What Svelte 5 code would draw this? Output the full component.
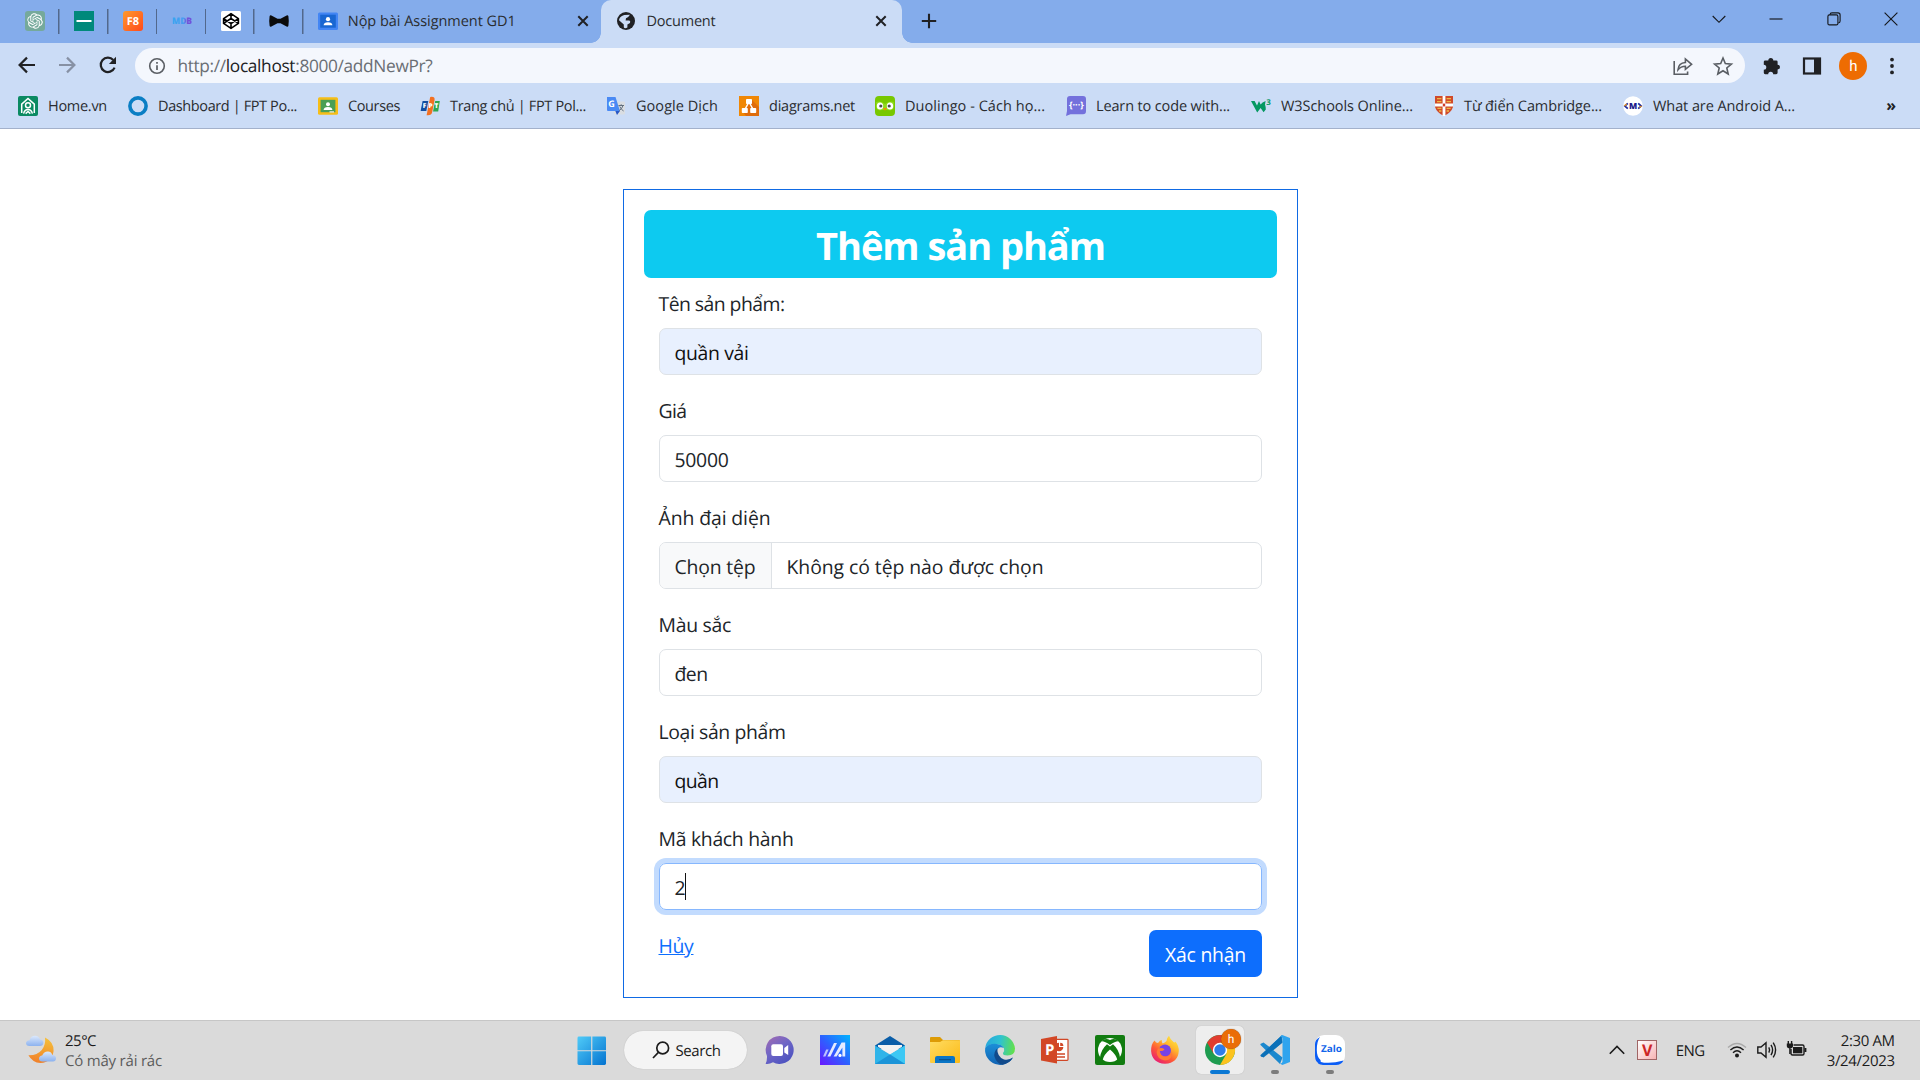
<script>
  // Tightens or loosens letter-spacing so that a label fills a given width.
  function fit(node, width) {
    const apply = () => {
      node.style.letterSpacing = '0px';
      const n = [...node.textContent].length;
      const natural = node.getBoundingClientRect().width;
      if (n > 0) node.style.letterSpacing = `${((width - natural) / n).toFixed(3)}px`;
    };
    apply();
    document.fonts?.ready.then(apply);
  }

  const pinned = ['gpt', 'sheet', 'f8', 'mdb', 'codepen', 'bow'];

  const bookmarks = [
    { icon: 'home', text: 'Home.vn', w: 59, cell: 110 },
    { icon: 'ring', text: 'Dashboard | FPT Po...', w: 139, cell: 190 },
    { icon: 'courses', text: 'Courses', w: 52, cell: 102 },
    { icon: 'fpt', text: 'Trang chủ | FPT Pol...', w: 136, cell: 186 },
    { icon: 'translate', text: 'Google Dịch', w: 82, cell: 133 },
    { icon: 'diagrams', text: 'diagrams.net', w: 86, cell: 136 },
    { icon: 'duo', text: 'Duolingo - Cách họ...', w: 140, cell: 191 },
    { icon: 'learn', text: 'Learn to code with...', w: 134, cell: 185 },
    { icon: 'w3', text: 'W3Schools Online...', w: 132, cell: 183 },
    { icon: 'cambridge', text: 'Từ điển Cambridge...', w: 138, cell: 189 },
    { icon: 'm', text: 'What are Android A...', w: 142, cell: 190 }
  ];

  const fields = [
    { label: 'Tên sản phẩm:', lw: 126, value: 'quần vải', vw: 74, kind: 'filled' },
    { label: 'Giá', lw: 28, value: '50000', vw: 54, kind: '' },
    { label: 'Ảnh đại diện', lw: 112, value: 'Không có tệp nào được chọn', vw: 257, kind: 'file' },
    { label: 'Màu sắc', lw: 72.5, value: 'đen', vw: 33, kind: '' },
    { label: 'Loại sản phẩm', lw: 127, value: 'quần', vw: 44, kind: 'filled' },
    { label: 'Mã khách hành', lw: 135, value: '2', vw: 10.5, kind: 'focus' }
  ];

  const apps = ['chat', 'asus', 'mail', 'folder', 'edge', 'ppt', 'xbox', 'firefox', 'chrome', 'vscode', 'zalo'];
</script>

{#snippet favicon(name)}
  <svg class="fav" viewBox="0 0 20 20">
    {#if name === 'gpt'}
      <rect width="20" height="20" rx="3" fill="#75a99b" />
      <path transform="translate(2.2 2.2) scale(.65)" fill="#fff" d="M22.2819 9.8211a5.9847 5.9847 0 0 0-.5157-4.9108 6.0462 6.0462 0 0 0-6.5098-2.9A6.0651 6.0651 0 0 0 4.9807 4.1818a5.9847 5.9847 0 0 0-3.9977 2.9 6.0462 6.0462 0 0 0 .7427 7.0966 5.98 5.98 0 0 0 .511 4.9107 6.051 6.051 0 0 0 6.5146 2.9001A5.9847 5.9847 0 0 0 13.2599 24a6.0557 6.0557 0 0 0 5.7718-4.2058 5.9894 5.9894 0 0 0 3.9977-2.9001 6.0557 6.0557 0 0 0-.7475-7.0729zm-9.022 12.6081a4.4755 4.4755 0 0 1-2.8764-1.0408l.1419-.0804 4.7783-2.7582a.7948.7948 0 0 0 .3927-.6813v-6.7369l2.02 1.1686a.071.071 0 0 1 .038.052v5.5826a4.504 4.504 0 0 1-4.4945 4.4944zm-9.6607-4.1254a4.4708 4.4708 0 0 1-.5346-3.0137l.142.0852 4.783 2.7582a.7712.7712 0 0 0 .7806 0l5.8428-3.3685v2.3324a.0804.0804 0 0 1-.0332.0615L9.74 19.9502a4.4992 4.4992 0 0 1-6.1408-1.6464zM2.3408 7.8956a4.485 4.485 0 0 1 2.3655-1.9728V11.6a.7664.7664 0 0 0 .3879.6765l5.8144 3.3543-2.0201 1.1685a.0757.0757 0 0 1-.071 0l-4.8303-2.7865A4.504 4.504 0 0 1 2.3408 7.872zm16.5963 3.8558L13.1038 8.364 15.1192 7.2a.0757.0757 0 0 1 .071 0l4.8303 2.7913a4.4944 4.4944 0 0 1-.6765 8.1042v-5.6772a.79.79 0 0 0-.407-.667zm2.0107-3.0231l-.142-.0852-4.7735-2.7818a.7759.7759 0 0 0-.7854 0L9.409 9.2297V6.8974a.0662.0662 0 0 1 .0284-.0615l4.8303-2.7866a4.4992 4.4992 0 0 1 6.6802 4.66zM8.3065 12.863l-2.02-1.1638a.0804.0804 0 0 1-.038-.0567V6.0742a4.4992 4.4992 0 0 1 7.3757-3.4537l-.142.0805L8.704 5.459a.7948.7948 0 0 0-.3927.6813zm1.0976-2.3654l2.602-1.4998 2.6069 1.4998v2.9994l-2.5974 1.4997-2.6067-1.4997Z" />
    {:else if name === 'sheet'}
      <rect width="20" height="20" fill="#00897b" /><rect x="2.5" y="9" width="15" height="2" fill="#fff" />
    {:else if name === 'f8'}
      <defs><linearGradient id="f8g" x1="0" y1="0" x2="1" y2="1"><stop offset="0" stop-color="#ff9a2b" /><stop offset="1" stop-color="#ff4a1c" /></linearGradient></defs>
      <rect width="20" height="20" rx="3" fill="url(#f8g)" />
      <text x="10" y="14" text-anchor="middle" font-size="11" font-weight="700" fill="#fff">F8</text>
    {:else if name === 'mdb'}
      <defs><linearGradient id="mdbg"><stop offset="0" stop-color="#35a5f0" /><stop offset=".6" stop-color="#4a9cf0" /><stop offset=".7" stop-color="#7152d8" /></linearGradient></defs>
      <text x="0" y="13" font-size="9" font-weight="800" textLength="20" lengthAdjust="spacingAndGlyphs" fill="url(#mdbg)">MDB</text>
    {:else if name === 'codepen'}
      <rect width="20" height="20" rx="1.5" fill="#fff" />
      <g fill="none" stroke="#000" stroke-width="1.6" stroke-linejoin="round">
        <path d="M10 2.6 L17.4 7.6 V12.4 L10 17.4 L2.6 12.4 V7.6Z M2.6 7.6 L10 12.5 L17.4 7.6 M2.6 12.4 L10 7.5 L17.4 12.4 M10 2.6 V7.5 M10 12.5 V17.4" />
      </g>
    {:else if name === 'bow'}
      <path d="M.6 5.2 Q1 3.9 2.4 4.5 L8.5 7.8 H11.5 L17.6 4.5 Q19 3.9 19.4 5.2 Q20.2 10 19.4 14.8 Q19 16.1 17.6 15.5 L11.5 12.2 H8.5 L2.4 15.5 Q1 16.1 .6 14.8 Q-.2 10 .6 5.2Z" fill="#0b0b0b" />
    {:else if name === 'classroom'}
      <rect y="1.5" width="20" height="17.5" rx="1.5" fill="#4285f4" /><rect x="2.2" y="3.7" width="15.6" height="13" fill="#1967d2" />
      <circle cx="10" cy="8.2" r="2.1" fill="#fff" /><path d="M5.6 14.2 Q5.8 11.2 10 11.2 Q14.2 11.2 14.4 14.2Z" fill="#fff" />
    {:else if name === 'globe'}
      <circle cx="10" cy="10" r="9" fill="#202124" />
      <path d="M8.2 4 L14 3.7 Q12.4 6.4 10 7.3 L9.6 9.4 H13.3 Q14.8 10 14 12 L11.4 13.4 V16.5 Q8.6 18 7.8 16.2 V13.6 L3 9.2 Q3 6 8.2 4Z" fill="#cbdcf6" />
    {:else if name === 'home'}
      <rect width="20" height="20" rx="2" fill="#0b8a62" />
      <g fill="none" stroke="#fff" stroke-width="1.5"><path d="M3.7 17 V8.2 L10 2.4 L16.3 8.2 V17" /><circle cx="10" cy="9.2" r="2.5" /><path d="M5.6 17.6 Q6.4 13.4 10 13.4 Q13.6 13.4 14.4 17.6 M7.6 17.6 L10 15.4 L12.4 17.6" /></g>
    {:else if name === 'ring'}
      <circle cx="10" cy="10" r="8.1" fill="none" stroke="#0a7ec4" stroke-width="3.6" />
    {:else if name === 'courses'}
      <rect y="1.2" width="20" height="17.6" rx="1.5" fill="#f6bd17" /><rect x="2.6" y="3.8" width="14.8" height="12.4" fill="#4a9f55" />
      <circle cx="10" cy="8.2" r="2" fill="#fff" /><path d="M5.6 14 Q5.8 11 10 11 Q14.2 11 14.4 14Z" fill="#fff" /><rect x="11.5" y="15.2" width="4.5" height="1.4" fill="#dfe7da" />
    {:else if name === 'fpt'}
      <path d="M2.6 5 H8.3 L6.3 15 H.6Z" fill="#134fa2" /><path d="M10.2 1 Q15 .2 14.6 4 L12.2 16 Q11.4 20 6.6 19.2Z" fill="#f37021" /><path d="M15.2 5 H19.8 L18.2 15.4 H13Z" fill="#2fa84f" />
      <g fill="#fff" font-size="6.5" font-weight="800"><text x="2.8" y="12">F</text><text x="8.5" y="12">P</text><text x="14.6" y="12">T</text></g>
    {:else if name === 'translate'}
      <rect x="8" y="5.5" width="11" height="13" rx="1" fill="#d9dde2" />
      <path d="M1 1 H9.5 L14 15 H2 Q1 15 1 14Z" fill="#4a8af4" /><path d="M9.3 15 H14 L11 19Z" fill="#2757c6" />
      <text x="2.2" y="11" font-size="9" font-weight="700" fill="#fff">G</text>
      <path d="M12.5 9.5 H18 M15.2 8.3 V9.5 M17 9.5 Q16 13 13.2 14.6 M13.8 10.5 Q15 13.5 17.6 15" stroke="#63707e" fill="none" />
    {:else if name === 'diagrams'}
      <rect width="20" height="20" fill="#f08705" /><path d="M12 3 L20 11 V20 H7 L4 16Z" fill="#df6c0c" />
      <path d="M10 6 L5.6 14 M10 6 L14.4 14" stroke="#fff" stroke-width="1.5" />
      <rect x="7" y="3" width="6" height="5" rx=".8" fill="#fff" /><rect x="2.8" y="12" width="6" height="5" rx=".8" fill="#fff" /><rect x="11.2" y="12" width="6" height="5" rx=".8" fill="#fff" />
    {:else if name === 'duo'}
      <rect width="20" height="20" rx="4" fill="#78c800" /><path d="M1.2 6 Q5 4.6 10 8 Q15 4.6 18.8 6 V12 Q17 15.5 13 14 H7 Q3 15.5 1.2 12Z" fill="#8fdb1c" />
      <ellipse cx="5" cy="10" rx="3.2" ry="3.6" fill="#fff" /><ellipse cx="15" cy="10" rx="3.2" ry="3.6" fill="#fff" /><circle cx="5.8" cy="10" r="1.6" fill="#4b4b4b" /><circle cx="14.2" cy="10" r="1.6" fill="#4b4b4b" /><path d="M8 12 H12 L10 14.8Z" fill="#f49000" />
    {:else if name === 'learn'}
      <path d="M4 0 H17 Q20 0 20 3 V15 Q20 18.3 17 18.3 H4.5 L0 20 L1 15 V3 Q1 0 4 0Z" fill="#7471dc" />
      <text x="10.4" y="12.4" font-size="9" font-weight="700" text-anchor="middle" textLength="15" fill="#fff">{'{···}'}</text>
    {:else if name === 'w3'}
      <path d="M0 5 H3.6 L6 9.4 L8 5 L9.6 8.4 L11.6 6.6 L14.6 5 L14 8.4 Q14.8 10.6 14.8 13.4 L12.6 16.2 L9.6 12 L6.2 16.4Z" fill="#059862" /><text x="15.2" y="8.8" font-size="8" font-weight="700" fill="#059862">3</text>
    {:else if name === 'cambridge'}
      <path d="M1 0 H19 V11 Q17 17 10 20 Q3 17 1 11Z" fill="#d04a2a" /><path d="M10 0 V20 M1 9 H19" stroke="#fff" stroke-width="2.8" />
      <path d="M3 2.6 H7.4 M12.6 2.6 H17 M3 5.6 H7.4 M12.6 5.6 H17 M3.4 12.4 H7.4 M12.6 12.4 H16.6 M5 15 H7.4 M12.6 15 H15" stroke="#eebb44" stroke-width="1.4" /><rect x="8.8" y="7.6" width="2.4" height="2.8" fill="#cf3b25" />
    {:else if name === 'm'}
      <circle cx="10" cy="10" r="9.8" fill="#fff" /><text x="10" y="13" font-size="8.5" font-weight="800" text-anchor="middle" fill="#1c1a8a">M</text>
      <path d="M4.8 7.4 L1.8 10 L4.8 12.6" stroke="#1c2aa0" fill="none" stroke-width="1.7" /><path d="M15.2 7.4 L18.2 10 L15.2 12.6" stroke="#1c2aa0" fill="none" stroke-width="1.7" /><path d="M16.4 11.6 L18.6 10 M1.4 10 L3.6 8" stroke="#f29a1c" stroke-width="1.2" />
    {/if}
  </svg>
{/snippet}

{#snippet cross()}
  <svg class="cross" viewBox="0 0 12 12"><path d="M1.3 1.3 L10.7 10.7 M10.7 1.3 L1.3 10.7" stroke="#202124" stroke-width="2" /></svg>
{/snippet}

{#snippet appIcon(name)}
  <svg class="app-svg" viewBox="0 0 30 30">
    {#if name === 'chat'}
      <defs><linearGradient id="chg" x1="0" y1="0" x2=".7" y2="1"><stop offset="0" stop-color="#a56bb0" /><stop offset=".5" stop-color="#6f66c6" /><stop offset="1" stop-color="#4c52c0" /></linearGradient></defs>
      <path d="M15 1 A14 14 0 1 1 8 27.3 Q4 29.5 .6 28.8 Q2.2 26 2 21 A14 14 0 0 1 15 1Z" fill="url(#chg)" />
      <rect x="6.3" y="9.3" width="11.7" height="11.7" rx="2" fill="#fff" /><path d="M19.3 13 L23.2 10 V20 L19.3 17.5Z" fill="#fff" />
    {:else if name === 'asus'}
      <defs><linearGradient id="asg" x1="0" y1="1" x2="1" y2="0"><stop offset="0" stop-color="#6a16ff" /><stop offset=".5" stop-color="#2c62ff" /><stop offset="1" stop-color="#00b4ff" /></linearGradient></defs>
      <rect width="30" height="30" fill="url(#asg)" />
      <g fill="#e4ebff"><path d="M3 21.5 L6.2 14.5 H8.6 L5.4 21.5Z" opacity=".75" /><path d="M7.4 21.5 L14 8 H17 L10.4 21.5Z" /><path d="M13.6 21.5 L21.6 7.4 H25.2 V21.5 H22.4 V12.4 L16.6 21.5Z" /></g><circle cx="20" cy="20.4" r="1.6" fill="#fff" />
    {:else if name === 'mail'}
      <path d="M0 10.5 L15 1 L30 10.5 V14 H0Z" fill="#0a5da8" /><path d="M0 10.5 L15 19.5 L30 10.5 V29 H0Z" fill="#2fb4e9" /><path d="M15 19.5 L30 10.5 V29Z" fill="#3cc8f4" /><path d="M0 29 L15 19.5 L30 29Z" fill="#1b94d8" />
      <path d="M3 10 H27 V11.8 L15 19.3 L3 11.8Z" fill="#f2f2f2" />
    {:else if name === 'folder'}
      <path d="M0 3 Q0 2 1 2 H10 L13 5 H29 Q30 5 30 6 V13 H0Z" fill="#dd9b05" /><defs><linearGradient id="fog" x1="0" y1="0" x2="1" y2="1"><stop offset="0" stop-color="#ffdc62" /><stop offset="1" stop-color="#fbba16" /></linearGradient></defs>
      <path d="M0 7 H10 L13 5.2 H30 V27 Q30 28 29 28 H1 Q0 28 0 27Z" fill="url(#fog)" /><path d="M5 28 V23 Q5 21 7.2 21 H22.8 Q25 21 25 23 V28Z" fill="#0a75c6" /><path d="M9 24.7 H21" stroke="#0b4d86" stroke-width="1.1" />
    {:else if name === 'edge'}
      <defs><linearGradient id="edg" x1="0" y1=".3" x2="1" y2=".4"><stop offset="0" stop-color="#26a6dd" /><stop offset=".5" stop-color="#2fc2d0" /><stop offset="1" stop-color="#62e04c" /></linearGradient><linearGradient id="edb" x1="0" y1="0" x2="0" y2="1"><stop offset="0" stop-color="#1b8fd8" /><stop offset="1" stop-color="#1263b3" /></linearGradient></defs>
      <path d="M.2 13 A15 15 0 0 1 30 13.5 Q30 20.5 22.5 20.5 Q17.5 20.5 18 18 Q19.8 16.5 19 13.6 Q17 9 10 9 Q3.5 9 .2 13Z" fill="url(#edg)" />
      <path d="M.2 13 Q3 8.6 10 8.7 Q17 9 18.8 13 Q13.5 10.6 11.8 16 Q10.8 23 18 25.5 Q23.5 27 28 22.5 A15 15 0 0 1 .2 13Z" fill="url(#edb)" />
      <path d="M12.3 13.6 Q8.4 17 9.6 22 Q11.5 28 17.3 29.8 Q24.5 28.8 28 22.6 Q24 25.5 19 24.5 Q12 22 12.3 13.6Z" fill="#114a8b" />
    {:else if name === 'ppt'}
      <rect x="12" y="4.3" width="16" height="21" rx=".8" fill="#fff" stroke="#d04727" stroke-width="1.2" /><circle cx="19" cy="12" r="4.3" fill="#d04727" /><path d="M19 12 V7 H24 V12Z" fill="#fff" /><path d="M20.2 11 V7.7 A3.3 3.3 0 0 1 23.4 11Z" fill="#d04727" /><path d="M16 19 H25 M16 22 H25" stroke="#d04727" stroke-width="1.3" />
      <path d="M1 4 L17 1 V28.5 L1 25.5Z" fill="#d24726" /><text x="5" y="20.3" font-size="15" font-weight="700" fill="#fff">P</text>
    {:else if name === 'xbox'}
      <rect width="30" height="30" rx="2" fill="#117c10" /><circle cx="15" cy="15" r="12" fill="#fff" /><path d="M6.2 6.4 Q9.5 6 15 10 Q20.5 6 23.8 6.4 Q20 2.6 15 5 Q10 2.6 6.2 6.4Z" fill="#117c10" /><path d="M12 9.2 Q6 14.5 5 22.4 L7.4 25.4 Q9 19.5 15 14.6 Q21 19.5 22.6 25.4 L25 22.4 Q24 14.5 18 9.2 L15 11.4Z" fill="#117c10" />
    {:else if name === 'firefox'}
      <defs><linearGradient id="ffg" x1=".9" y1="0" x2=".2" y2="1"><stop offset="0" stop-color="#fff14a" /><stop offset=".35" stop-color="#ffb72c" /><stop offset=".65" stop-color="#ff5a35" /><stop offset="1" stop-color="#e5177b" /></linearGradient></defs>
      <path d="M4.5 5.5 Q6 8 8 8 Q10 5 11.8 5 Q11.5 7 12.6 8.4 Q15 8 16.5 6 Q17 2.5 19 .8 Q20 4.2 23.5 7 Q25 8 25.4 6.4 Q29 11 28.8 16 Q28 28 15 28.8 Q2 28 1.1 16 Q1 9 4.5 5.5Z" fill="url(#ffg)" />
      <circle cx="15" cy="15.4" r="6" fill="#7542e5" /><path d="M8 13.5 Q12 12 14.5 14.2 Q13.2 16.5 9.8 16 Q10.4 21.5 16 21.5 Q21 21 21.3 16 Q23.5 25 15 25.5 Q7 24.5 6.6 17Z" fill="#ff7a35" />
    {:else if name === 'chrome'}
      <circle cx="15" cy="15" r="15" fill="#1e9c50" /><path d="M21.5 18.7 L15 30 A15 15 0 0 0 28 7.5 H15Z" fill="#fcc31e" /><path d="M15 15 L8.5 18.6 L2.1 7.5 A15 15 0 0 1 28 7.5 H15Z" fill="#e23c30" /><circle cx="15" cy="15" r="7.2" fill="#fff" /><circle cx="15" cy="15" r="5.7" fill="#2f7de9" />
    {:else if name === 'vscode'}
      <path d="M22 0 L9.5 12 L3.5 7.4 L.8 8.7 Q0 9.4 .8 10.3 L20 29 L22.5 22.5 L13.4 15.2 L22.5 7.5Z" fill="#1b88ce" /><path d="M22.5 7.5 L3.5 22.6 L.8 21.3 Q0 20.5 .8 19.7 L21 1.2Z" fill="#0b70b8" /><path d="M22.3 0 L30 3 V27 L22.3 30 L20 28.5 Q22.5 28.5 22.5 26.5 V3.5 Q22.5 1.5 20 1.5Z" fill="#2fa4ee" />
    {:else if name === 'zalo'}
      <rect width="30" height="30" rx="9" fill="#fff" /><path d="M5 2 Q1.8 6 1.8 15 Q1.8 22 5.5 25 Q6.5 28 5 29 Q3 28.6 1.2 26 Q0 24 0 21 V9 Q0 4.5 5 2Z M5 26.7 Q14 29.5 28.5 25.6 Q26.5 30 21 30 H8 Q5 30 3 28.6Z" fill="#0b5df5" />
      <text x="16.5" y="17.2" text-anchor="middle" font-size="9.6" font-weight="700" textLength="21" lengthAdjust="spacingAndGlyphs" fill="#1265ea">Zalo</text>
    {/if}
  </svg>
{/snippet}

<div class="screen">
  <div class="tabstrip">
    <div class="pins">
      {#each pinned as p}<div class="pin">{@render favicon(p)}</div>{/each}
    </div>
    <div class="tab idle">
      {@render favicon('classroom')}<span class="t15" use:fit={168}>Nộp bài Assignment GD1</span><i></i>{@render cross()}
    </div>
    <div class="tab active">
      {@render favicon('globe')}<span class="t15" use:fit={69}>Document</span><i></i>{@render cross()}
    </div>
    <svg class="plus" viewBox="0 0 16 16"><path d="M8 .8 V15.2 M.8 8 H15.2" stroke="#202124" stroke-width="2.1" /></svg>
    <div class="winbtns">
      <svg viewBox="0 0 14 14"><path d="M.7 4 L7 10.3 L13.3 4" /></svg>
      <svg viewBox="0 0 14 14"><path d="M.5 7 H13.5" /></svg>
      <svg viewBox="0 0 14 14"><rect x=".9" y="2.9" width="10" height="10" rx="1.5" /><path d="M3 2.7 Q3.2 .9 5 .9 H11 Q13.1 .9 13.1 3 V9 Q13.1 10.8 11.3 11" /></svg>
      <svg viewBox="0 0 14 14"><path d="M.6 .6 L13.4 13.4 M13.4 .6 L.6 13.4" /></svg>
    </div>
  </div>

  <div class="toolbar">
    <svg class="nav" viewBox="0 0 20 20"><path d="M18 10 H3 M10 2.6 L2.6 10 L10 17.4" stroke="#202124" /></svg>
    <svg class="nav" viewBox="0 0 20 20"><path d="M2 10 H17 M10 2.6 L17.4 10 L10 17.4" stroke="#8791a4" /></svg>
    <svg class="nav" viewBox="0 0 20 20"><path d="M16.6 12.6 A7.2 7.2 0 1 1 15.3 5" stroke="#202124" /><path d="M18 1.8 V8.9 H10.9Z" fill="#202124" /></svg>
    <div class="omni">
      <svg class="info" viewBox="0 0 18 18"><circle cx="9" cy="9" r="7.3" fill="none" stroke="#5a5e64" stroke-width="1.6" /><path d="M9 8.2 V13 M9 5 V6.8" stroke="#5a5e64" stroke-width="1.7" /></svg>
      <span class="url" use:fit={255}>http://<b>localhost</b>:8000/addNewPr?</span>
      <i></i>
      <svg class="share" viewBox="0 0 20 20"><path d="M1.2 5 V18.2 H14.6 V15.5 M5 13.8 Q5.5 6.8 12.4 6.5 V3 L18.6 8.3 L12.4 13.4 V10.2 Q7.8 10.2 5 13.8Z" /></svg>
      <svg class="share" viewBox="0 0 20 20"><path d="M10 2 L12.3 7.6 L18.4 8.1 L13.8 12 L15.2 18 L10 14.8 L4.8 18 L6.2 12 L1.6 8.1 L7.7 7.6Z" /></svg>
    </div>
    <div class="ext">
      <svg viewBox="0 0 20 20"><path d="M6.3 4.4 A2.5 2.5 0 0 1 11.3 4.4 H14.2 Q15.6 4.4 15.6 5.8 V8.7 A2.4 2.4 0 0 1 15.6 13.5 V16.8 Q15.6 18.2 14.2 18.2 H11.2 A2.5 2.5 0 0 0 6.2 18.2 H3.2 Q1.8 18.2 1.8 16.8 V13.8 A2.5 2.5 0 0 0 1.8 8.8 V5.8 Q1.8 4.4 3.2 4.4Z" fill="#202124" /></svg>
      <svg viewBox="0 0 20 20"><rect x="2" y="2.5" width="16" height="15" fill="none" stroke="#202124" stroke-width="2.2" /><rect x="12" y="2" width="6" height="16" fill="#202124" /></svg>
      <div class="avatar">h</div>
      <svg viewBox="0 0 20 20"><g fill="#202124"><circle cx="10" cy="3.6" r="1.9" /><circle cx="10" cy="10" r="1.9" /><circle cx="10" cy="16.4" r="1.9" /></g></svg>
    </div>
  </div>

  <div class="bookmarks">
    {#each bookmarks as b}
      <div class="bm" style="width:{b.cell}px">{@render favicon(b.icon)}<span class="t15" use:fit={b.w}>{b.text}</span></div>
    {/each}
    <span class="more">»</span>
  </div>

  <main>
    <div class="card">
      <h1><span use:fit={289}>Thêm sản phẩm</span></h1>
      <form>
        {#each fields as f}
          <div class="field">
            <div class="label"><span use:fit={f.lw}>{f.label}</span></div>
            <div class="input {f.kind}">
              {#if f.kind === 'file'}<div class="choose"><span use:fit={81}>Chọn tệp</span></div>{/if}
              <span use:fit={f.vw}>{f.value}</span>
              {#if f.kind === 'focus'}<em class="caret"></em>{/if}
            </div>
          </div>
        {/each}
        <div class="actions">
          <a href="#cancel"><span use:fit={35}>Hủy</span></a>
          <button type="button"><span use:fit={81}>Xác nhận</span></button>
        </div>
      </form>
    </div>
  </main>

  <footer>
    <div class="weather">
      <svg viewBox="0 0 30 30">
        <defs><linearGradient id="moon" x1=".6" y1="0" x2=".4" y2="1"><stop offset="0" stop-color="#f5bf3b" /><stop offset="1" stop-color="#f0802a" /></linearGradient><linearGradient id="cl" x1="0" y1="0" x2="0" y2="1"><stop offset="0" stop-color="#dbe8fc" /><stop offset="1" stop-color="#8cb2ef" /></linearGradient></defs>
        <path d="M19 2.5 Q28 7 27.6 16 Q26 27.6 14.5 28 Q6.5 27.5 2.4 20.2 Q11 20.5 15.8 15 Q20 9.5 19 2.5Z" fill="url(#moon)" />
        <path d="M3.5 11 Q0 11 0 8 Q.4 5.4 3.5 5.2 Q5 .6 9.2 .8 Q13 1 14 4.4 Q17.4 4.6 17.4 7.8 Q17 11 14 11Z" fill="url(#cl)" />
        <path d="M16.5 26.5 Q13 26.5 13 23.5 Q13.2 21 16.2 20.6 Q18 16.2 22 16.4 Q25.6 16.8 26.4 20 Q30 20.2 30 23.4 Q29.8 26.3 27 26.5Z" fill="url(#cl)" />
      </svg>
      <div><p><span use:fit={31}>25°C</span></p><p class="dim"><span use:fit={97}>Có mây rải rác</span></p></div>
    </div>
    <div class="dock">
      <div class="slot start"><svg viewBox="0 0 30 30"><defs><linearGradient id="win" x1="0" y1="0" x2="1" y2="1"><stop offset="0" stop-color="#50cbf8" /><stop offset="1" stop-color="#0473d0" /></linearGradient></defs><path d="M.5 2 Q.5 .5 2 .5 H14.4 V14.4 H.5Z M15.6 .5 H28 Q29.5 .5 29.5 2 V14.4 H15.6Z M.5 15.6 H14.4 V29.5 H2 Q.5 29.5 .5 28Z M15.6 15.6 H29.5 V28 Q29.5 29.5 28 29.5 H15.6Z" fill="url(#win)" /></svg></div>
      <div class="search"><svg viewBox="0 0 18 18"><circle cx="10.7" cy="7" r="5.9" /><path d="M6.4 11.4 L1 17" /></svg><span use:fit={45}>Search</span></div>
      {#each apps as a}
        <div class="slot" class:on={a === 'chrome'} class:run={a === 'vscode' || a === 'zalo'}>
          {@render appIcon(a)}
          {#if a === 'chrome'}<div class="badge">h</div>{/if}
        </div>
      {/each}
    </div>
    <div class="tray">
      <svg class="up" viewBox="0 0 16 10"><path d="M.8 8.8 L8 1.4 L15.2 8.8" /></svg>
      <div class="vkey">V</div>
      <span class="eng" use:fit={29}>ENG</span>
      <svg class="sys" viewBox="0 0 20 20"><path d="M1 7.6 Q10 -.8 19 7.6" stroke="#aaa" /><path d="M3.4 10 Q10 4 16.6 10 M6 12.7 Q10 9 14 12.7" /><circle cx="10" cy="15.6" r="2" class="solid" /></svg>
      <svg class="sys" viewBox="0 0 20 20"><path d="M.8 7 H4 L9 2.8 V17.2 L4 13 H.8Z M11.8 7.4 Q13.4 10 11.8 12.6 M14 4.9 Q17.2 10 14 15.1 M16.2 2.6 Q21 10 16.2 17.4" /></svg>
      <svg class="sys" viewBox="0 0 20 20"><path d="M6.5 5 H15.5 Q17 5 17 6.5 V13.5 Q17 15 15.5 15 H5.5 Q4 15 4 13.5 V9" /><rect x="6" y="7" width="9.3" height="6.3" class="solid" /><path d="M18.4 8 V12" stroke-width="2" /><path d="M-.2 3.5 H6 V6 Q6 8.3 3 8.3 Q-.2 8.3 -.2 6Z" class="solid" /><path d="M1.3 1 V4 M4.6 1 V4 M2.9 8 V14" /></svg>
      <div class="clock"><p><span use:fit={54}>2:30 AM</span></p><p><span use:fit={68}>3/24/2023</span></p></div>
    </div>
  </footer>
</div>

<style>
  :global(body) { margin: 0; overflow: hidden; background: #fff; }
  .screen, .screen * { box-sizing: border-box; }
  .screen { width: 1920px; height: 1080px; display: flex; flex-direction: column; font-family: 'Open Sans', 'Noto Sans', sans-serif; color: #212529; text-rendering: geometricPrecision; white-space: nowrap; }
  svg { display: block; flex: none; overflow: visible; }
  i { flex: 1; }
  p { margin: 0; }
  .fav { width: 20px; height: 20px; }
  .t15 { font-size: 14.5px; line-height: 20px; color: #2a2c30; }
  .cross { width: 12px; height: 12px; }

  .tabstrip { height: 43px; flex: none; display: flex; background: #84aceb; }
  .pins { display: flex; padding-left: 11px; }
  .pin { width: 48.8px; height: 42px; display: flex; align-items: center; justify-content: center; background: linear-gradient(#52688c, #52688c) no-repeat right 9px / 1.5px 25px; }
  .tab { display: flex; align-items: center; gap: 10px; height: 43px; padding-bottom: 1px; }
  .tab span { padding-top: 1.4px; }
  .idle { width: 297.2px; padding-left: 14px; padding-right: 12px; }
  .active { position: relative; width: 301px; padding-left: 15.5px; padding-right: 14.5px; background: #cbdcf6; border-radius: 10px 10px 0 0; }
  .active::before, .active::after { content: ''; position: absolute; bottom: 0; width: 10px; height: 10px; }
  .active::before { left: -10px; background: radial-gradient(circle at 0 0, transparent 9.5px, #cbdcf6 10px); }
  .active::after { right: -10px; background: radial-gradient(circle at 100% 0, transparent 9.5px, #cbdcf6 10px); }
  .plus { width: 16px; height: 16px; margin: 13px 0 0 19px; }
  .winbtns { margin-left: auto; display: flex; gap: 43.4px; padding: 11.5px 22px 0 0; }
  .winbtns svg { width: 14px; height: 14px; fill: none; stroke: #15181d; stroke-width: 1.15; }

  .toolbar { height: 45px; flex: none; background: #cbdcf6; display: flex; align-items: center; padding: 0 0 0 17px; }
  .nav { width: 20px; height: 20px; margin: -1px 20.3px 0 0; fill: none; stroke-width: 2.2; }
  .omni { flex: none; width: 1610px; height: 35px; margin-left: -3px; border-radius: 18px; background: #f4f7fd; display: flex; align-items: center; padding: 0 12px 0 13.5px; }
  .info { width: 18px; height: 18px; }
  .url { margin-left: 11px; padding-top: 1px; font-size: 17.3px; color: #6a6e74; }
  .url b { font-weight: 400; color: #202124; }
  .share { width: 20px; height: 20px; margin-left: 20px; fill: none; stroke: #5a5e64; stroke-width: 1.6; }
  .ext { flex: none; display: flex; align-items: center; padding-left: 17.5px; }
  .ext svg { width: 20px; height: 20px; margin-right: 20px; }
  .ext svg:last-child { margin-right: 0; }
  .avatar { width: 28px; height: 28px; margin: 0 15px 0 -3px; border-radius: 50%; background: #ee6c02; color: #fff; text-align: center; font: 15px/28px Roboto, sans-serif; }

  .bookmarks { height: 41px; flex: none; background: #cbdcf6; border-bottom: 1px solid #a3b1cb; display: flex; align-items: center; padding: 0 24px 4px 18px; }
  .bm { display: flex; gap: 10px; flex: none; height: 20px; }
  .bm span { padding-top: 1px; }
  .more { margin: -3px 0 0 auto; font-size: 16px; font-weight: 700; line-height: 20px; color: #202124; }

  main { flex: 1; display: flex; justify-content: center; align-items: flex-start; padding: 60px 0 0 1px; }
  .card { width: 675px; height: 809px; border: 1px solid #0f6ae4; padding: 20px; }
  h1 { margin: 0; height: 68px; border-radius: 7px; background: #0dcaf0; color: #fff; font-size: 38px; font-weight: 700; line-height: 72px; text-align: center; }
  form { padding: 10px 15px 0 14.5px; font-size: 19.4px; }
  .field { margin-bottom: 20px; }
  .label { height: 40px; line-height: 32px; }
  .input { height: 47px; border: 1px solid #dee2e6; border-radius: 7px; padding-left: 15px; line-height: 48px; display: flex; }
  .filled { background: #e8f0fe; color: #111; }
  .file { padding-left: 0; overflow: hidden; }
  .choose { width: 112px; padding-left: 15px; margin-right: 15px; background: #f8f9fa; border-right: 1px solid #dee2e6; }
  .focus { border-color: #86b7fe; box-shadow: 0 0 0 5px #c2dbfe; }
  .caret { width: 1px; height: 27px; margin: 9px 0 0 -.5px; background: #111; }
  .actions { display: flex; justify-content: space-between; align-items: flex-start; }
  a { color: #0d6efd; line-height: 32px; text-decoration: underline; }
  button { width: 113px; height: 47px; border: 0; border-radius: 7px; background: #0d6efd; color: #fff; font: inherit; line-height: 50px; padding: 0; }

  footer { height: 60px; flex: none; background: #dadada; border-top: 1px solid #c6c6c6; display: flex; font-size: 15px; line-height: 20px; color: #1b1b1b; }
  .weather { width: 564.5px; display: flex; padding: 10px 0 0 26px; gap: 9px; }
  .weather svg { width: 30px; height: 30px; margin-top: 4px; }
  .dim { color: #5c5c5c; }
  .dock { display: flex; align-items: center; height: 58px; }
  .slot { position: relative; width: 48px; height: 48px; margin-right: 7px; border-radius: 5px; display: flex; align-items: center; justify-content: center; }
  .app-svg { width: 30px; height: 30px; }
  .start { width: 54px; margin-right: 5px; }
  .start svg { width: 29.5px; height: 29.5px; margin-top: 1px; }
  .search { width: 123px; height: 38px; margin-right: 9.5px; border-radius: 19px; background: #f4f4f4; box-shadow: 0 0 1px #aaa; display: flex; align-items: center; gap: 6px; padding-left: 28px; }
  .search svg { width: 18px; height: 18px; fill: none; stroke: #1b1b1b; stroke-width: 1.7; }
  .search span { padding-top: 2px; }
  .on { background: #eeeeee; box-shadow: 0 0 1px #aaa; }
  .on::after, .run::after { content: ''; position: absolute; bottom: 0; left: 20px; width: 8px; height: 4px; border-radius: 2px; background: #7c7c7c; }
  .on::after { left: 14px; width: 20px; background: #0a78d4; }
  .badge { position: absolute; left: 25px; top: 3px; width: 20px; height: 20px; border-radius: 50%; background: #ea6d08; box-shadow: 0 0 1px #6b3b10; color: #fff; font: 12px/20px Roboto, sans-serif; text-align: center; }
  .tray { margin-left: auto; display: flex; align-items: center; height: 58px; padding-right: 25.3px; }
  .up { width: 16px; height: 10px; fill: none; stroke: #1b1b1b; stroke-width: 1.6; }
  .vkey { width: 20px; height: 20px; margin-left: 12px; border: 1px solid #a06565; background: linear-gradient(135deg, #fff, #f7b3b3); color: #cc2626; font-weight: 700; font-size: 16px; line-height: 18px; text-align: center; }
  .eng { margin: 0 22px 0 18.5px; padding-top: 2px; }
  .sys { width: 20px; height: 20px; margin-right: 10px; fill: none; stroke: #1b1b1b; stroke-width: 1.4; }
  .sys .solid { fill: #1b1b1b; stroke: none; }
  .clock { width: 78px; padding-top: 2px; text-align: right; }
</style>
